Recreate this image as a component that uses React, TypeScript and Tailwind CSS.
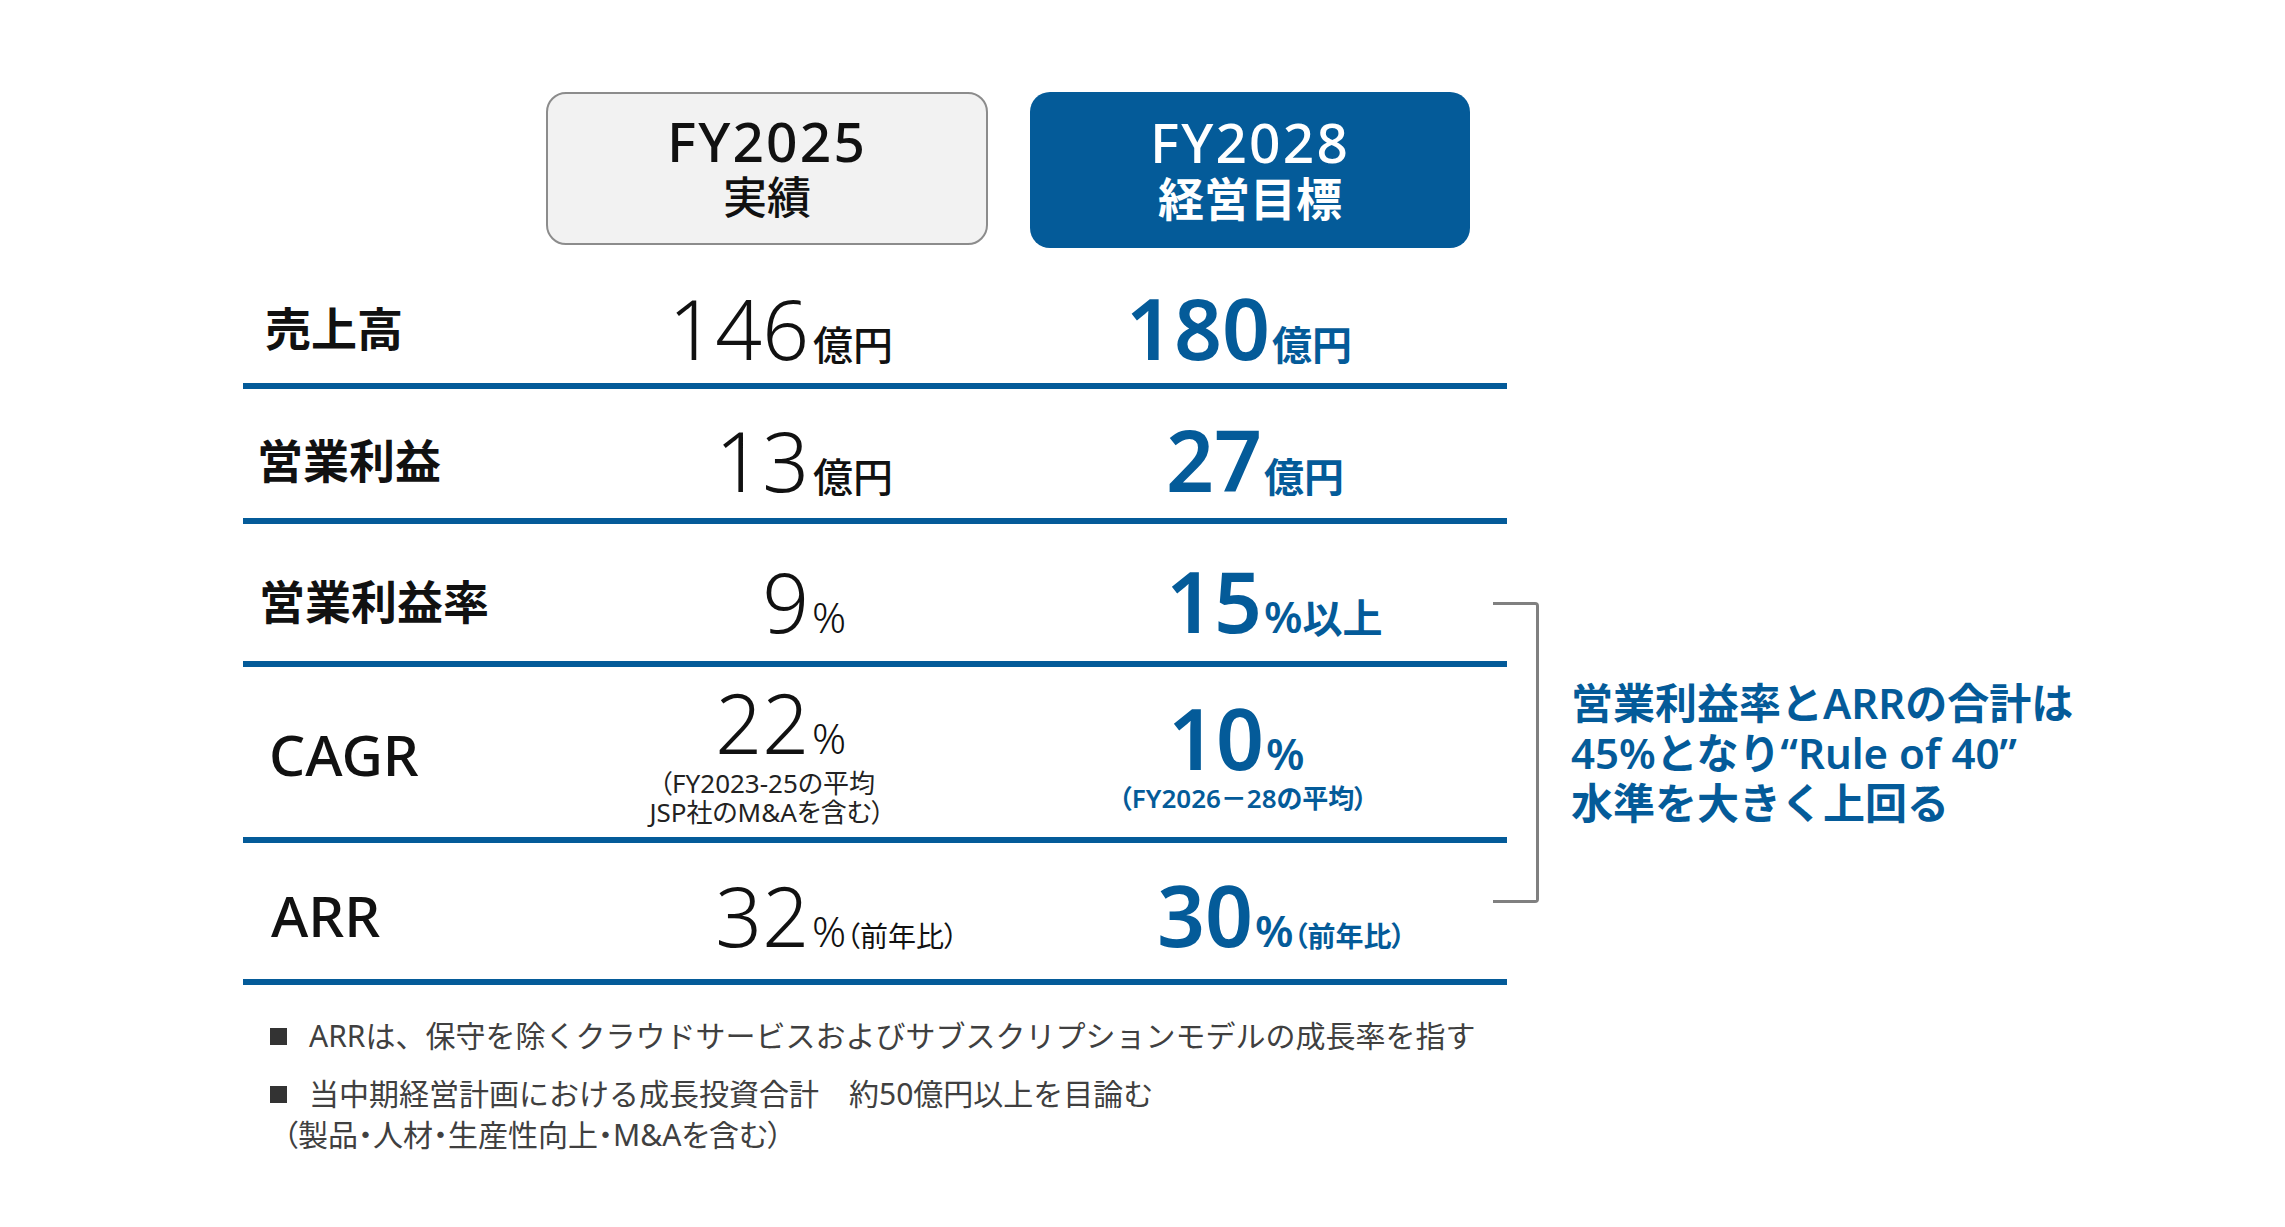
import React from "react";

function LeftVal({ num, children, note }: { num: string; children?: React.ReactNode; note?: string[] }) {
  return (
    <div className="flex flex-col">
      <div className="flex items-baseline">
        <span className="w-[263px] text-right text-[82px] font-light leading-none text-[#111]">{num}</span>
        {children}
      </div>
      {note && (
        <div className="mt-[6px] text-center text-[26px] leading-[29px] text-[#222] [font-feature-settings:'palt']">
          {note.map((n) => (
            <div key={n}>{n}</div>
          ))}
        </div>
      )}
    </div>
  );
}

function RightVal({ num, children, note, w }: { num: string; children?: React.ReactNode; note?: string; w: string }) {
  return (
    <div className="flex flex-col text-[#045b99]">
      <div className="flex items-baseline">
        <span className={`${w} text-right text-[84px] font-semibold leading-none`}>{num}</span>
        {children}
      </div>
      {note && (
        <div className="mt-[3px] pr-[14px] text-center text-[26px] font-semibold leading-[30px] [font-feature-settings:'palt']">
          {note}
        </div>
      )}
    </div>
  );
}

const Line = () => <div className="h-[6px] w-[1264px] bg-[#045b99]" />;

export default function App() {
  return (
    <div className="w-[2285px] h-[1227px] bg-white font-['Noto_Sans','Noto_Sans_CJK_JP',sans-serif] text-[#111] overflow-hidden">
      <div className="flex pl-[243px] pt-[92px]">
        <div className="w-[1264px] shrink-0">
          {/* header */}
          <div className="flex h-[155px] items-start">
            <div className="w-[303px]" />
            <div className="flex h-[153px] w-[442px] flex-col items-center justify-center rounded-[20px] border-2 border-[#8c8c8c] bg-[#f2f2f2]">
              <div className="text-[55px] font-medium leading-[56px] tracking-[0.04em]">FY2025</div>
              <div className="text-[44px] font-medium leading-[56px]">実績</div>
            </div>
            <div className="w-[42px]" />
            <div className="flex h-[156px] w-[440px] flex-col items-center justify-center rounded-[20px] bg-[#045b99] text-white">
              <div className="text-[55px] font-medium leading-[56px] tracking-[0.04em]">FY2028</div>
              <div className="text-[46px] font-bold leading-[56px]">経営目標</div>
            </div>
          </div>

          {/* row 1 */}
          <div className="flex h-[136px] items-center pt-[26px]">
            <div className="w-[303px] pl-[22px] text-[46px] font-bold leading-none">売上高</div>
            <div className="w-[442px]">
              <LeftVal num="146">
                <span className="ml-[4px] text-[40px] font-medium leading-none">億円</span>
              </LeftVal>
            </div>
            <div className="w-[42px]" />
            <div className="w-[440px]">
              <RightVal num="180" w="w-[240px]">
                <span className="ml-[2px] text-[40px] font-bold leading-none">億円</span>
              </RightVal>
            </div>
          </div>
          <Line />

          {/* row 2 */}
          <div className="flex h-[129px] items-center pt-[12px]">
            <div className="w-[303px] pl-[14px] text-[46px] font-bold leading-none">営業利益</div>
            <div className="w-[442px]">
              <LeftVal num="13">
                <span className="ml-[4px] text-[40px] font-medium leading-none">億円</span>
              </LeftVal>
            </div>
            <div className="w-[42px]" />
            <div className="w-[440px]">
              <RightVal num="27" w="w-[232px]">
                <span className="ml-[2px] text-[40px] font-bold leading-none">億円</span>
              </RightVal>
            </div>
          </div>
          <Line />

          {/* row 3 */}
          <div className="flex h-[137px] items-center pt-[16px]">
            <div className="w-[303px] pl-[16px] text-[46px] font-bold leading-none">営業利益率</div>
            <div className="w-[442px]">
              <LeftVal num="9">
                <span className="ml-[3px] text-[42px] font-light leading-none">%</span>
              </LeftVal>
            </div>
            <div className="w-[42px]" />
            <div className="w-[440px]">
              <RightVal num="15" w="w-[232px]">
                <span className="ml-[2px] text-[44px] font-semibold leading-none">%</span>
                <span className="text-[40px] font-bold leading-none">以上</span>
              </RightVal>
            </div>
          </div>
          <Line />

          {/* row 4 */}
          <div className="flex h-[170px] items-center pt-[4px]">
            <div className="w-[303px] pl-[26px] text-[57px] font-medium leading-none">CAGR</div>
            <div className="w-[442px]">
              <LeftVal num="22" note={["（FY2023-25の平均", "JSP社のM&Aを含む）"]}>
                <span className="ml-[3px] text-[42px] font-light leading-none">%</span>
              </LeftVal>
            </div>
            <div className="w-[42px]" />
            <div className="w-[440px]">
              <RightVal num="10" w="w-[234px]" note="（FY2026－28の平均）">
                <span className="ml-[2px] text-[44px] font-semibold leading-none">%</span>
              </RightVal>
            </div>
          </div>
          <Line />

          {/* row 5 */}
          <div className="flex h-[136px] items-center pt-[8px]">
            <div className="w-[303px] pl-[28px] text-[57px] font-medium leading-none">ARR</div>
            <div className="w-[442px]">
              <LeftVal num="32">
                <span className="ml-[3px] text-[42px] font-light leading-none">%</span>
                <span className="text-[28px] leading-none [font-feature-settings:'palt']">（前年比）</span>
              </LeftVal>
            </div>
            <div className="w-[42px]" />
            <div className="w-[440px]">
              <RightVal num="30" w="w-[223px]">
                <span className="ml-[2px] text-[44px] font-semibold leading-none">%</span>
                <span className="text-[28px] font-bold leading-none [font-feature-settings:'palt']">（前年比）</span>
              </RightVal>
            </div>
          </div>
          <Line />

          {/* footnotes */}
          <div className="mt-[31px] text-[30px] leading-[40px] text-[#404040]">
            <div className="flex items-center pl-[27px]">
              <div className="h-[17px] w-[17px] bg-[#333]" />
              <div className="ml-[22px]">ARRは、保守を除くクラウドサービスおよびサブスクリプションモデルの成長率を指す</div>
            </div>
            <div className="mt-[18px] flex items-center pl-[27px]">
              <div className="h-[17px] w-[17px] bg-[#333]" />
              <div className="ml-[22px]">当中期経営計画における成長投資合計　約50億円以上を目論む</div>
            </div>
            <div className="pl-[40px] leading-[41px] [font-feature-settings:'palt']">（製品・人材・生産性向上・M&Aを含む）</div>
          </div>
        </div>

        {/* bracket + annotation */}
        <div className="mt-[510px] flex items-center self-start">
          <div className="ml-[-14px] h-[301px] w-[46px] rounded-r-[4px] border-y-[3px] border-r-[3px] border-[#808080]" />
          <div className="ml-[32px] text-[42px] font-semibold leading-[50px] text-[#045b99]">
            <div>営業利益率とARRの合計は</div>
            <div>45%となり“Rule of 40”</div>
            <div>水準を大きく上回る</div>
          </div>
        </div>
      </div>
    </div>
  );
}
